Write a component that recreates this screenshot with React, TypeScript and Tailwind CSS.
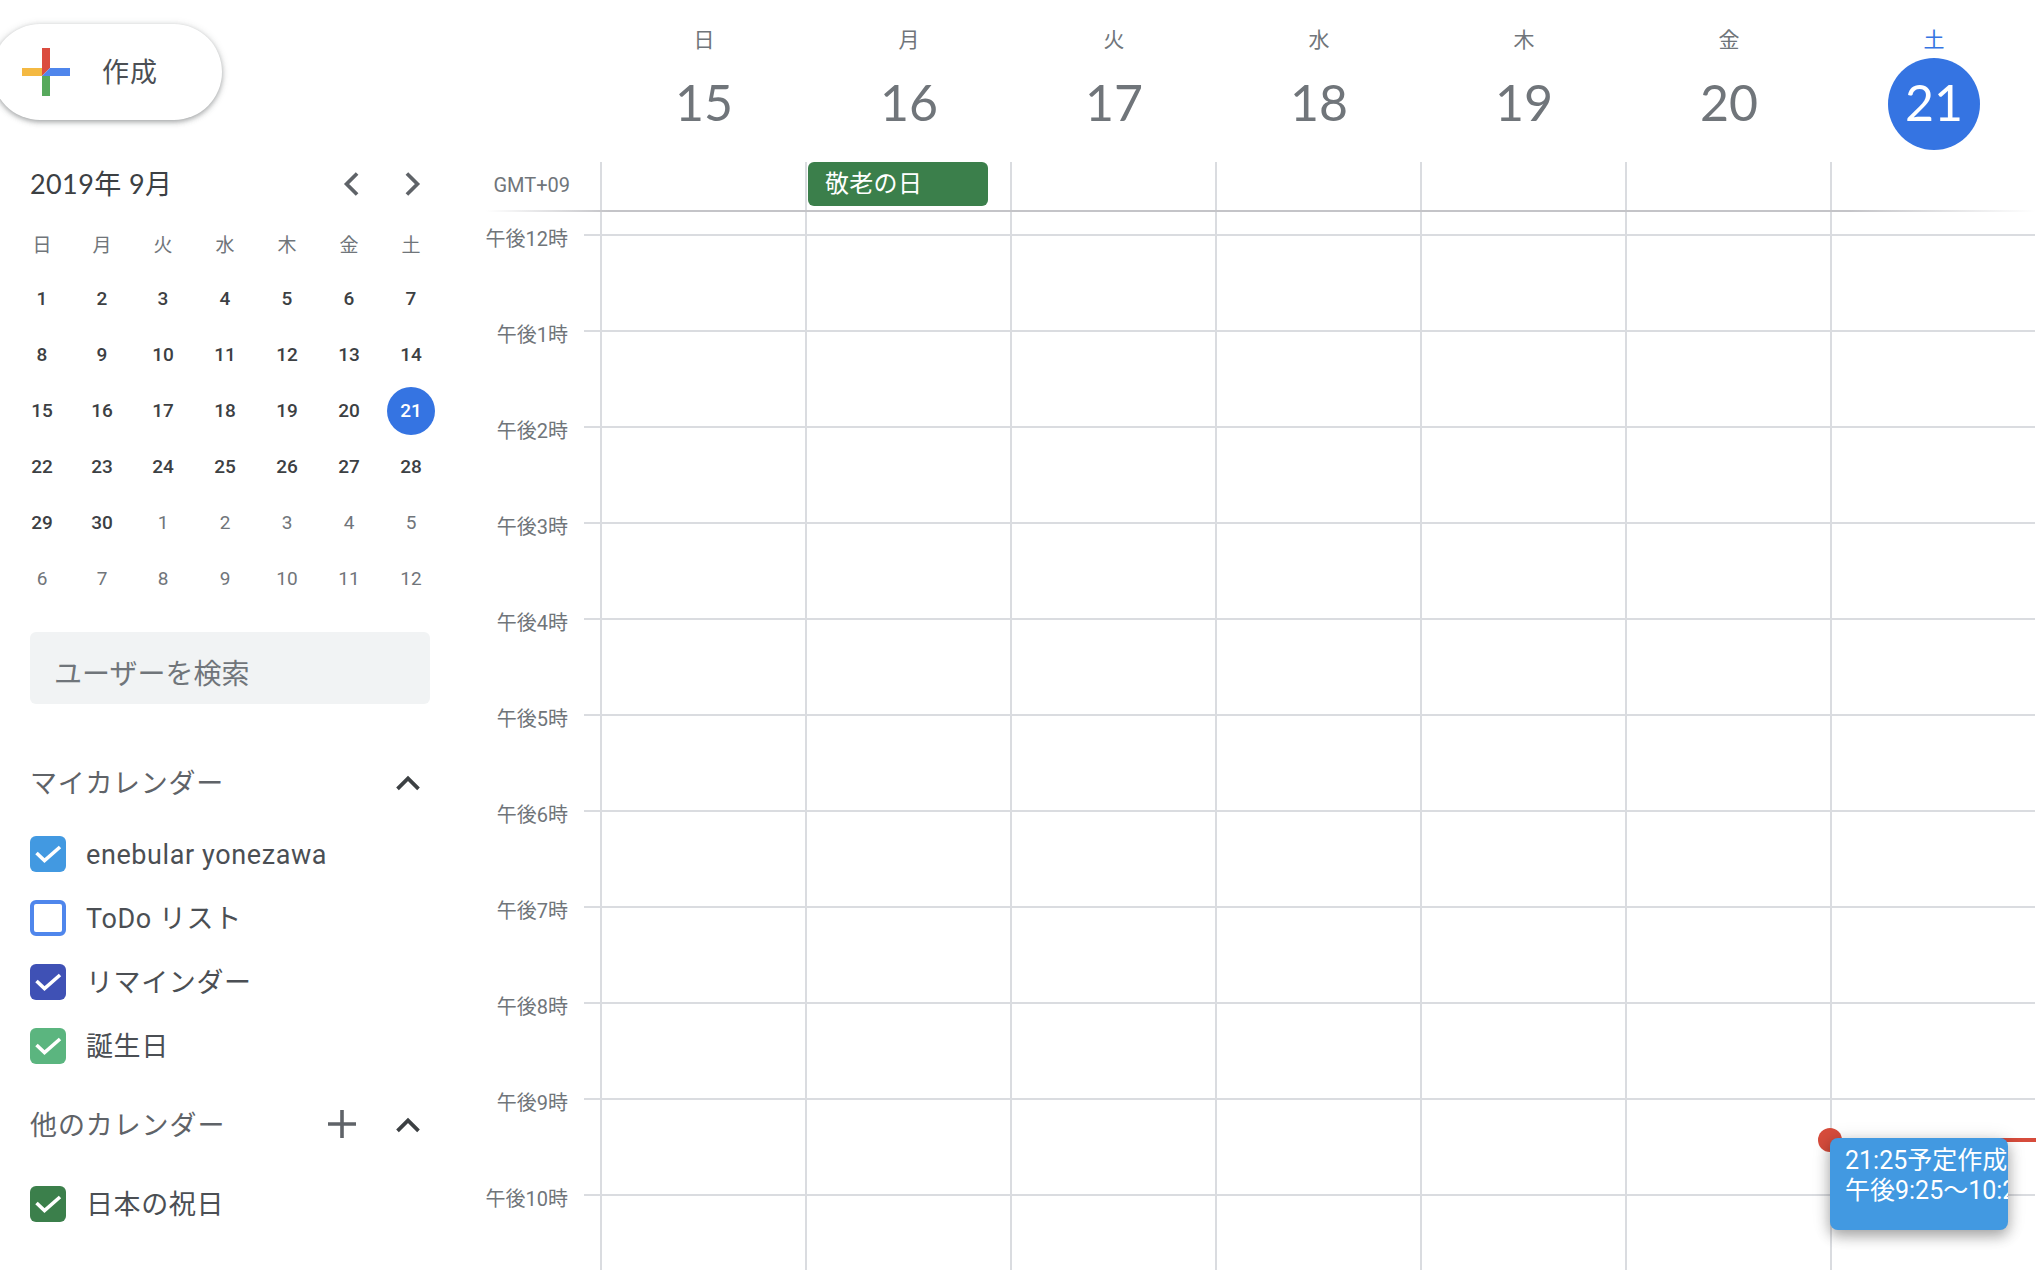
import React from "react";

const WEEK = ["日", "月", "火", "水", "木", "金", "土"];
const HEAD = [15, 16, 17, 18, 19, 20, 21];
const HOURS = ["午後12時", "午後1時", "午後2時", "午後3時", "午後4時", "午後5時", "午後6時", "午後7時", "午後8時", "午後9時", "午後10時"];
const MONTH: [number, boolean][] = [
  ...Array.from({ length: 30 }, (_, i) => [i + 1, true] as [number, boolean]),
  ...[1, 2, 3, 4, 5, 6, 7, 8, 9, 10, 11, 12].map((d) => [d, false] as [number, boolean]),
];

function Chevron({ d, className }: { d: string; className: string }) {
  return (
    <svg viewBox="0 0 24 24" className={className} fill="none" stroke="currentColor" strokeWidth="3.2">
      <path d={d} />
    </svg>
  );
}

function CheckRow({ box, label, checked = true }: { box: string; label: string; checked?: boolean }) {
  return (
    <div className="flex h-[64px] items-center gap-[20px]">
      <div className={`flex h-[36px] w-[36px] items-center justify-center rounded-[6px] ${box}`}>
        {checked && (
          <svg viewBox="0 0 36 36" className="h-[36px] w-[36px]" fill="none" stroke="#fff" strokeWidth="3.6">
            <path d="M6.5 17 L14.5 24.5 L30 11" />
          </svg>
        )}
      </div>
      <span className="mt-[2px] text-[27px] leading-[36px] tracking-[0.6px] text-[#4b4f54]">{label}</span>
    </div>
  );
}

export default function App() {
  return (
    <div className="relative flex h-[1270px] w-[2040px] overflow-hidden bg-white font-['Roboto','Noto_Sans_CJK_JP',sans-serif]">
      {/* Sidebar */}
      <aside className="w-[480px] shrink-0">
        <div className="-ml-[8px] mt-[24px] flex h-[96px] w-[230px] items-center rounded-[48px] bg-white shadow-[0_2px_5px_rgba(60,64,67,0.4),0_1px_8px_rgba(60,64,67,0.15)]">
          <svg viewBox="0 0 48 48" className="ml-[30px] h-[48px] w-[48px]">
            <polygon points="20,0 28,0 28,20 20,28" fill="#db4c3f" />
            <polygon points="0,20 20,20 20,28 0,28" fill="#f4b942" />
            <polygon points="28,20 48,20 48,28 20,28" fill="#4f86ec" />
            <polygon points="20,28 28,28 28,48 20,48" fill="#57a95c" />
          </svg>
          <span className="ml-[32px] mt-[1px] text-[27px] leading-[36px] tracking-[1px] text-[#4b4f54]">作成</span>
        </div>

        <div className="mx-[30px] mt-[44px] flex h-[40px] w-[400px] items-center">
          <span className="font-['Lato','Noto_Sans_CJK_JP',sans-serif] text-[27px] leading-[36px] tracking-[0.4px] text-[#3c4043]">2019年 9月</span>
          <Chevron d="M15.5 3 L6.5 12 L15.5 21" className="ml-auto h-[28px] w-[28px] text-[#5f6368]" />
          <Chevron d="M8.5 3 L17.5 12 L8.5 21" className="ml-[30px] mr-[5px] h-[28px] w-[28px] text-[#5f6368]" />
        </div>

        <div className="ml-[12px] mt-[17px] grid grid-cols-[60px_60px_62px_62px_62px_62px_62px]">
          {WEEK.map((w) => (
            <div key={w} className="flex h-[50px] items-center justify-center text-[19px] text-[#70757a]">{w}</div>
          ))}
          {MONTH.map(([d, cur], i) => (
            <div key={i} className="flex h-[56px] items-center justify-center">
              {cur && d === 21 ? (
                <span className="flex h-[48px] w-[48px] items-center justify-center rounded-full bg-[#3574e2] text-[19px] font-medium text-white">21</span>
              ) : (
                <span className={cur ? "text-[19px] font-medium text-[#3c4043]" : "text-[19px] text-[#70757a]"}>{d}</span>
              )}
            </div>
          ))}
        </div>

        <div className="ml-[30px] mt-[25px] flex h-[72px] w-[400px] items-center rounded-[6px] bg-[#f1f3f4] pl-[24px] text-[28px] leading-[36px] text-[#70757a]">
          <span className="mt-[13px]">ユーザーを検索</span>
        </div>

        <div className="ml-[30px] w-[400px]">
          <div className="mt-[54px] flex h-[48px] items-center justify-between">
            <span className="mt-[3px] text-[27px] leading-[36px] tracking-[0.7px] text-[#5f6368]">マイカレンダー</span>
            <Chevron d="M3 17 L12 8 L21 17" className="mr-[8px] mt-[2px] h-[28px] w-[28px] text-[#3c4043]" />
          </div>
          <div className="mt-[16px]">
            <CheckRow box="bg-[#4299e1]" label="enebular yonezawa" />
            <CheckRow box="border-[4px] border-[#4f86ec] bg-white" label="ToDo リスト" checked={false} />
            <CheckRow box="bg-[#3f51b5]" label="リマインダー" />
            <CheckRow box="bg-[#5bb57f]" label="誕生日" />
          </div>
          <div className="mt-[22px] flex h-[48px] items-center">
            <span className="mt-[3px] text-[27px] leading-[36px] tracking-[0.9px] text-[#5f6368]">他のカレンダー</span>
            <svg viewBox="0 0 28 28" className="ml-auto mr-[38px] h-[28px] w-[28px]" fill="none" stroke="#5f6368" strokeWidth="3.6">
              <path d="M14 0 V28 M0 14 H28" />
            </svg>
            <Chevron d="M3 17 L12 8 L21 17" className="mr-[8px] mt-[2px] h-[28px] w-[28px] text-[#3c4043]" />
          </div>
          <div className="mt-[24px]">
            <CheckRow box="bg-[#3b7f4b]" label="日本の祝日" />
          </div>
        </div>
      </aside>

      {/* Main */}
      <main className="flex-1">
        <div className="flex h-[162px]">
          <div className="w-[121px]" />
          <div className="grid w-[1435px] grid-cols-7">
            {HEAD.map((n, i) => {
              const today = n === 21;
              return (
                <div key={n} className="flex flex-col items-center pt-[28px]">
                  <div className={`ml-[1px] h-[24px] text-[21px] leading-[24px] ${today ? "text-[#3574e2]" : "text-[#70757a]"}`}>{WEEK[i]}</div>
                  <div className={`ml-[1px] mt-[6px] flex h-[92px] w-[92px] items-center justify-center rounded-full pb-[4px] font-['Lato',sans-serif] text-[50px] leading-none ${today ? "bg-[#3574e2] text-white" : "text-[#70757a]"}`}>{n}</div>
                </div>
              );
            })}
          </div>
        </div>

        <div className="flex h-[48px]">
          <div className="w-[90px] self-center pb-[2px] text-right text-[20px] leading-[24px] text-[#70757a]">GMT+09</div>
          <div className="w-[30px]" />
          <div className="grid w-[1436px] grid-cols-[repeat(7,205px)]">
            {HEAD.map((n) => (
              <div key={n} className="border-l-2 border-[#dadce0]">
                {n === 16 && (
                  <div className="ml-[1px] flex h-[44px] w-[180px] items-center rounded-[6px] bg-[#3b7f4b] pl-[17px] text-[24px] leading-[30px] tracking-[0.3px] text-white">敬老の日</div>
                )}
              </div>
            ))}
          </div>
        </div>

        <div className="ml-[6px] h-[2px] w-[1550px] bg-[linear-gradient(90deg,transparent_0,#c4c4c8_8%,#c4c4c8_88%,transparent_100%)]" />

        <div className="flex h-[22px]">
          <div className="w-[120px]" />
          <div className="grid w-[1436px] grid-cols-[repeat(7,205px)]">
            {HEAD.map((n) => (
              <div key={n} className="border-l-2 border-[#dadce0]" />
            ))}
          </div>
        </div>

        {HOURS.map((h) => (
          <div key={h} className="flex h-[96px]">
            <div className="-mt-[7px] h-[24px] w-[88px] text-right text-[20px] leading-[24px] text-[#70757a]">{h}</div>
            <div className="w-[16px]" />
            <div className="h-[2px] w-[16px] bg-[#dadce0]" />
            <div className="grid w-[1436px] grid-cols-[repeat(7,205px)] border-r-0">
              {HEAD.map((n) => (
                <div key={n} className="border-l-2 border-t-2 border-[#dadce0]" />
              ))}
            </div>
          </div>
        ))}
      </main>

      {/* Now indicator and event over the grid */}
      <div className="absolute left-[1830px] top-[1138px] h-[4px] w-[206px] bg-[#d64c3c]" />
      <div className="absolute left-[1818px] top-[1128px] h-[24px] w-[24px] rounded-full bg-[#d64c3c]" />
      <div className="absolute left-[1830px] top-[1138px] h-[92px] w-[178px] overflow-hidden whitespace-nowrap rounded-[8px] bg-[#4299e1] pl-[15px] pt-[8px] text-[25px] leading-[30px] text-white shadow-[0_6px_14px_rgba(0,0,0,0.3),0_2px_20px_rgba(0,0,0,0.12)]">
        <div>21:25予定作成</div>
        <div>午後9:25～10:25</div>
      </div>
    </div>
  );
}
